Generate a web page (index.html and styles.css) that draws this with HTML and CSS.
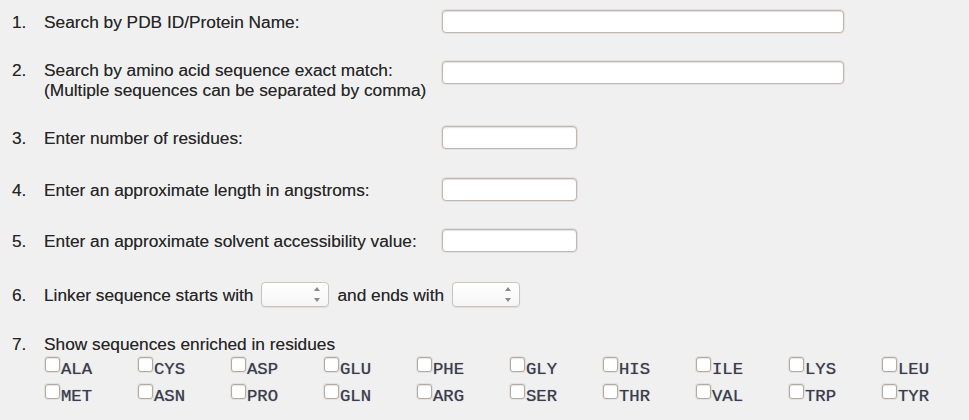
FILE: index.html
```html
<!DOCTYPE html>
<html lang="en">
<head>
<meta charset="utf-8">
<title>Search</title>
<link rel="stylesheet" href="styles.css">
</head>
<body>
<form class="form">
  <div class="row r1">
    <span class="num">1.</span>
    <span class="label">Search by PDB ID/Protein Name:</span>
    <input class="field long" type="text">
  </div>
  <div class="row r2 top">
    <span class="num">2.</span>
    <span class="label">Search by amino acid sequence exact match:<br>(Multiple sequences can be separated by comma)</span>
    <input class="field long nudge" type="text">
  </div>
  <div class="row r3">
    <span class="num">3.</span>
    <span class="label">Enter number of residues:</span>
    <input class="field short" type="text">
  </div>
  <div class="row r4">
    <span class="num">4.</span>
    <span class="label">Enter an approximate length in angstroms:</span>
    <input class="field short" type="text">
  </div>
  <div class="row r5">
    <span class="num">5.</span>
    <span class="label">Enter an approximate solvent accessibility value:</span>
    <input class="field short" type="text">
  </div>
  <div class="row r6">
    <span class="num">6.</span>
    <span class="inline">Linker sequence starts with</span>
    <span class="spin">
      <select class="sel"><option></option></select>
      <svg class="arrows" width="8" height="17" viewBox="0 0 8 17"><path d="M4 1 L7 5 L1 5 Z" fill="#8a8a8a"/><path d="M1 12 L7 12 L4 16 Z" fill="#8a8a8a"/></svg>
    </span>
    <span class="inline">and ends with</span>
    <span class="spin">
      <select class="sel"><option></option></select>
      <svg class="arrows" width="8" height="17" viewBox="0 0 8 17"><path d="M4 1 L7 5 L1 5 Z" fill="#8a8a8a"/><path d="M1 12 L7 12 L4 16 Z" fill="#8a8a8a"/></svg>
    </span>
  </div>
  <div class="r7">
    <div class="title"><span class="num">7.</span><span>Show sequences enriched in residues</span></div>
    <div class="residues">
      <label class="res"><input type="checkbox" class="cb"><span>ALA</span></label>
      <label class="res"><input type="checkbox" class="cb"><span>CYS</span></label>
      <label class="res"><input type="checkbox" class="cb"><span>ASP</span></label>
      <label class="res"><input type="checkbox" class="cb"><span>GLU</span></label>
      <label class="res"><input type="checkbox" class="cb"><span>PHE</span></label>
      <label class="res"><input type="checkbox" class="cb"><span>GLY</span></label>
      <label class="res"><input type="checkbox" class="cb"><span>HIS</span></label>
      <label class="res"><input type="checkbox" class="cb"><span>ILE</span></label>
      <label class="res"><input type="checkbox" class="cb"><span>LYS</span></label>
      <label class="res"><input type="checkbox" class="cb"><span>LEU</span></label>
      <label class="res"><input type="checkbox" class="cb"><span>MET</span></label>
      <label class="res"><input type="checkbox" class="cb"><span>ASN</span></label>
      <label class="res"><input type="checkbox" class="cb"><span>PRO</span></label>
      <label class="res"><input type="checkbox" class="cb"><span>GLN</span></label>
      <label class="res"><input type="checkbox" class="cb"><span>ARG</span></label>
      <label class="res"><input type="checkbox" class="cb"><span>SER</span></label>
      <label class="res"><input type="checkbox" class="cb"><span>THR</span></label>
      <label class="res"><input type="checkbox" class="cb"><span>VAL</span></label>
      <label class="res"><input type="checkbox" class="cb"><span>TRP</span></label>
      <label class="res"><input type="checkbox" class="cb"><span>TYR</span></label>
    </div>
  </div>
</form>
</body>
</html>
```
FILE: styles.css
```css
html, body {
  margin: 0;
  padding: 0;
  background: #f0f0f0;
}
body {
  font-family: "Liberation Sans", Arial, sans-serif;
  font-size: 17.3px;
  line-height: 20px;
  color: #262626;
  text-shadow: 0 0 0.6px rgba(0,0,0,0.45);
  width: 969px;
  height: 420px;
  overflow: hidden;
}
.form {
  display: grid;
  grid-template-rows: 50px 66px 52px 51px 53px 52px auto;
  padding: 10px 0 0 12px;
}
.row {
  display: flex;
  align-items: center;
  align-self: start;
  min-height: 23px;
}
.row.top {
  align-items: flex-start;
}
.num {
  display: inline-block;
  width: 32px;
  flex: none;
}
.label {
  width: 398px;
  flex: none;
}
.field {
  box-sizing: border-box;
  height: 23px;
  margin: 0;
  padding: 2px 4px;
  background: #fff;
  border: 1px solid #bfb8b0;
  border-radius: 4px;
  box-shadow: inset 0 1px 1px rgba(0,0,0,0.12), 0 0 0 1px rgba(200,192,184,0.35);
  font: inherit;
  outline: none;
}
.field.long { width: 402px; }
.field.short { width: 135px; }
.field.nudge { margin-top: 1px; }
.inline { flex: none; }
.spin {
  position: relative;
  display: inline-flex;
  margin: 0 8px;
}
.sel {
  appearance: none;
  -webkit-appearance: none;
  box-sizing: border-box;
  width: 68px;
  height: 25px;
  margin: 0;
  border: 1px solid #c9c3bd;
  border-radius: 4px;
  background: linear-gradient(#ffffff, #f5f5f5);
  box-shadow: 0 1px 1px rgba(0,0,0,0.08);
  font: inherit;
  outline: none;
}
.arrows {
  position: absolute;
  right: 8px;
  top: 4px;
  pointer-events: none;
}
.r7 {
  display: flex;
  flex-direction: column;
}
.title {
  display: flex;
}
.residues {
  display: grid;
  grid-template-columns: repeat(10, 93px);
  grid-auto-rows: 27px;
  margin: 3px 0 0 33px;
}
.res {
  display: flex;
  align-items: flex-start;
  font-family: "Liberation Mono", "Courier New", monospace;
  font-size: 17.3px;
  line-height: 20px;
  color: #3c3c4c;
  text-shadow: 0 0 0.8px rgba(40,40,70,0.6);
}
.res span {
  margin-top: 3px;
  margin-left: 1px;
}
.cb {
  appearance: none;
  -webkit-appearance: none;
  box-sizing: border-box;
  width: 15px;
  height: 15px;
  margin: 0;
  background: #fff;
  border: 1px solid #b3aba3;
  border-radius: 3px;
  box-shadow: inset 0 1px 1px rgba(0,0,0,0.1), 0 0 0 1px rgba(200,192,184,0.3);
  flex: none;
}
```
